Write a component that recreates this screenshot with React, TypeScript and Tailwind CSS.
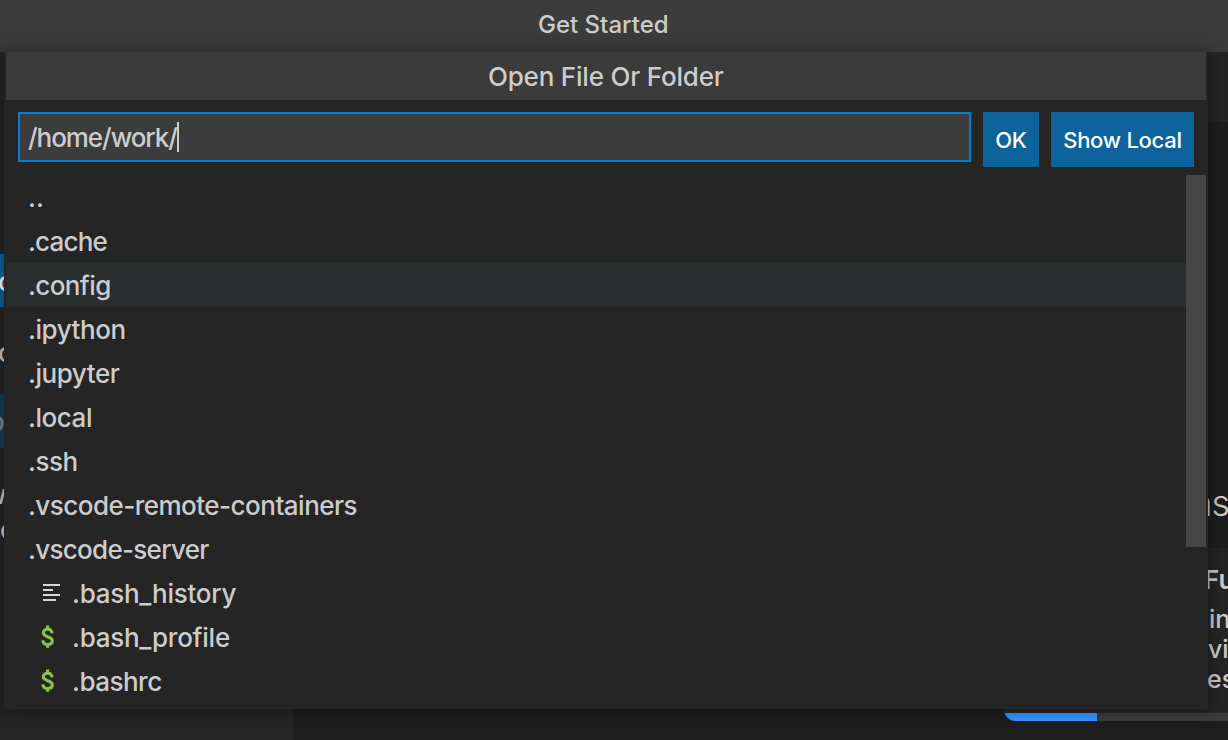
import React from "react";

const folders = [
  { name: "..", cls: "" },
  { name: ".cache", cls: "tracking-[-0.8px]" },
  { name: ".config", cls: "bg-[#2a2d2e] tracking-[-0.6px]" },
  { name: ".ipython", cls: "tracking-[-0.45px]" },
  { name: ".jupyter", cls: "tracking-[-0.45px]" },
  { name: ".local", cls: "tracking-[-0.45px]" },
  { name: ".ssh", cls: "tracking-[-0.5px]" },
  { name: ".vscode-remote-containers", cls: "tracking-[-0.52px]" },
  { name: ".vscode-server", cls: "tracking-[-0.7px]" },
];

const files = [
  { name: ".bash_history", kind: "text", cls: "tracking-[-0.25px]" },
  { name: ".bash_profile", kind: "shell", cls: "tracking-[-0.25px]" },
  { name: ".bashrc", kind: "shell", cls: "tracking-[-0.5px]" },
];

function TextIcon() {
  return (
    <svg width="18" height="20" viewBox="0 0 18 20" className="ml-[37px] mr-[11px] shrink-0" fill="#d4d7d6">
      <rect x="0" y="1" width="17" height="2" />
      <rect x="0" y="6" width="10" height="2" />
      <rect x="0" y="11" width="17" height="2" />
      <rect x="0" y="16" width="13" height="2" />
    </svg>
  );
}

function ShellIcon() {
  return (
    <svg width="14" height="24" viewBox="0 0 14 24" className="ml-[35px] mr-[17px] shrink-0" fill="none" stroke="#8dc149" strokeWidth="3.1">
      <path d="M6.6 .6v4M6.6 18.8v4M11 8.4C10.9 5.6 9.3 4.3 6.7 4.3 4 4.3 2.3 5.6 2.3 7.8c0 4.8 9 3 9 8 0 2.3-1.8 3.7-4.6 3.7-3 0-4.7-1.6-4.8-4.3" />
    </svg>
  );
}

function Backdrop() {
  return (
    <div className="flex h-[740px] flex-col overflow-hidden bg-[#1e1e1e]">
      <div className="h-[52px] shrink-0 bg-[#3c3c3c] pl-[538px] text-[24px] leading-[50px] text-[#cccccc]">Get Started</div>
      <div className="flex grow">
        <div className="w-[294px] shrink-0 overflow-hidden bg-[#252526] pt-[202px] text-[26px] text-[#cccccc]">
          <div className="h-[53px] bg-[#0e639c] leading-[55px] text-white"><span className="-ml-[2px]">c</span></div>
          <div className="mt-[19px] h-[53px] leading-[53px]"><span className="-ml-[2px]">c</span></div>
          <div className="mt-[16px] h-[53px] bg-[#17405f] leading-[53px] text-[#8b8b8b]"><span className="-ml-[11px]">o</span></div>
          <div className="mt-[29px] h-[36px] leading-[36px]"><span className="-ml-[15px]">w</span></div>
          <div className="h-[36px] leading-[34px]">c</div>
        </div>
        <div className="flex w-[934px] shrink-0 flex-col overflow-hidden">
          <div className="h-[70px] shrink-0 bg-[#252526]" />
          <div className="flex h-[426px] shrink-0 items-end justify-end overflow-hidden">
            <div className="mb-[24px] mr-[-1px] text-[36px] font-light leading-[42px] tracking-[-1px] text-[#cccccc]">ns</div>
          </div>
          <div className="ml-[710px] h-[173px] shrink-0 overflow-hidden rounded-bl-[12px] bg-[#252526] text-[#cccccc]">
            <div className="h-[165px] pl-[200px] pt-[16px]">
              <div className="text-[26px] font-semibold leading-[32px]">Fu</div>
              <div className="mt-[8px] pl-[5px] text-[25px] leading-[30px]">in</div>
              <div className="pl-[4px] text-[25px] leading-[30px]">vi</div>
              <div className="pl-[3px] text-[25px] leading-[30px]">es</div>
            </div>
            <div className="h-[8px] bg-[#3c3c3c]"><div className="h-full w-[93px] bg-[#3794ff]" /></div>
          </div>
        </div>
      </div>
    </div>
  );
}

export default function App() {
  return (
    <div className="relative h-[740px] w-[1228px] overflow-hidden font-['Inter',sans-serif] font-[450]">
      <Backdrop />
      <div className="absolute left-[4px] top-[52px] flex h-[657px] w-[1204px] flex-col bg-[#252526] px-[2px] text-[26px] text-[#cccccc] shadow-[0_0_16px_2px_rgba(0,0,0,0.36)]">
        <div className="h-[48px] shrink-0 bg-[#3b3b3b] pl-[482px] leading-[50px] tracking-[-0.2px]">Open File Or Folder</div>
        <div className="flex h-[75px] shrink-0 items-start gap-[12px] px-[12px] pt-[12px]">
          <div className="flex h-[50px] w-[953px] items-center border-2 border-[#007fd4] bg-[#3c3c3c] pl-[8px]">
            <span className="tracking-[-1.05px]">/home/work/</span><span className="h-[30px] w-[2px] bg-[#cccccc]" />
          </div>
          <button className="h-[55px] w-[56px] bg-[#0e639c] pt-[2px] text-[22px] font-medium tracking-[-0.2px] text-white">OK</button>
          <button className="h-[55px] w-[143px] whitespace-nowrap bg-[#0e639c] pt-[2px] text-[22px] font-medium tracking-[-0.25px] text-white">Show Local</button>
        </div>
        <div className="flex grow">
          <div className="w-[1180px] shrink-0">
            {folders.map((f) => (
              <div key={f.name} className={`h-[44px] w-[1200px] pl-[22px] leading-[46px] ${f.cls}`}>{f.name}</div>
            ))}
            {files.map((f) => (
              <div key={f.name} className="flex h-[44px] items-center">
                {f.kind === "text" ? <TextIcon /> : <ShellIcon />}
                <span className={`pt-[2px] leading-[46px] ${f.cls}`}>{f.name}</span>
              </div>
            ))}
          </div>
          <div className="relative h-[372px] w-[20px] shrink-0 bg-[#464646]" />
        </div>
      </div>
    </div>
  );
}
